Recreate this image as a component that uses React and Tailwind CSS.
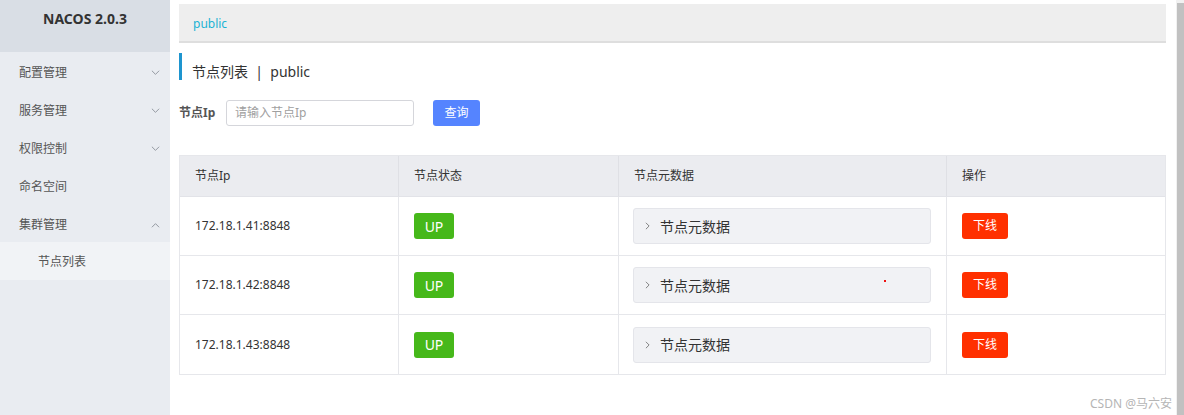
import React from 'react';

const font = { fontFamily: '"Noto Sans", "Noto Sans CJK SC", sans-serif' };

const Chevron = ({ up }) => (
  <svg viewBox="0 0 10 6" className="w-[9px] h-[6px]" fill="none" stroke="#8a9099" strokeWidth="1">
    {up ? <path d="M1 5.5L5 1.5L9 5.5" /> : <path d="M1 0.5L5 4.5L9 0.5" />}
  </svg>
);

const menu = [
  { name: '配置管理', arrow: 'down' },
  { name: '服务管理', arrow: 'down' },
  { name: '权限控制', arrow: 'down' },
  { name: '命名空间' },
  { name: '集群管理', arrow: 'up' },
];

const nodes = ['172.18.1.41:8848', '172.18.1.42:8848', '172.18.1.43:8848'];

const App = () => {
  return (
    <div className="flex w-[1184px] h-[415px] bg-white overflow-hidden text-[#333]" style={font}>
      {/* Sidebar */}
      <div className="w-[170px] shrink-0 bg-[#e9ecf1] flex flex-col">
        <div className="h-[52px] bg-[#d9dee5] flex justify-center pt-[9px]">
          <p className="text-[14px] font-bold text-[#333] leading-[20px]">NACOS 2.0.3</p>
        </div>
        <div className="pt-[2px]">
          {menu.map((m) => (
            <div key={m.name} className="h-[38px] flex items-center justify-between pl-[19px] pr-[10px]">
              <span className="text-[12px] text-[#555]">{m.name}</span>
              {m.arrow && <Chevron up={m.arrow === 'up'} />}
            </div>
          ))}
          <div className="h-[38px] -mt-[2px] flex items-center pl-[38px] bg-[#f1f3f6]">
            <span className="text-[12px] text-[#555] mt-[2px]">节点列表</span>
          </div>
        </div>
      </div>

      {/* Main */}
      <div className="flex-1 pl-[9px] pr-[10px] pt-[4px]">
        <div className="h-[39px] bg-[#eeeeee] border-b-2 border-[#dedede] flex items-center pl-[14px] pt-[3px]">
          <span className="text-[12px] text-[#1ab3d4]">public</span>
        </div>

        <div className="mt-[10px] h-[27px] border-l-[3px] border-[#1e95cf] flex items-center pl-[10px] pt-[10px]">
          <span className="text-[14px] text-[#333]">节点列表&nbsp;&nbsp;|&nbsp;&nbsp;public</span>
        </div>

        <div className="mt-[20px] flex items-center h-[26px]">
          <span className="text-[12px] font-bold text-[#555] w-[47px]">节点Ip</span>
          <div className="w-[188px] h-[26px] border border-[#d5d6db] rounded-[3px] flex items-center pl-[8px]">
            <span className="text-[12px] text-[#a0a0a0]">请输入节点Ip</span>
          </div>
          <button className="ml-[19px] w-[47px] h-[26px] bg-[#5584ff] rounded-[3px] text-white text-[12px]">查询</button>
        </div>

        {/* Table */}
        <div className="mt-[29px] border border-[#e6e7eb]">
          <div className="grid grid-cols-[219px_220px_328px_1fr] h-[41px] bg-[#ebecf0] border-b border-[#e2e3e8] text-[12px] text-[#333]">
            <div className="flex items-center pl-[15px] border-r border-[#dfe0e5]">节点Ip</div>
            <div className="flex items-center pl-[15px] border-r border-[#dfe0e5]">节点状态</div>
            <div className="flex items-center pl-[15px] border-r border-[#dfe0e5]">节点元数据</div>
            <div className="flex items-center pl-[15px]">操作</div>
          </div>
          {nodes.map((ip, i) => (
            <div
              key={ip}
              className={`grid grid-cols-[219px_220px_328px_1fr] h-[59px] ${i < nodes.length - 1 ? 'border-b border-[#e6e7eb]' : ''}`}
            >
              <div className="flex items-center pl-[15px] border-r border-[#e6e7eb] text-[12px] text-[#333]">{ip}</div>
              <div className="flex items-center pl-[15px] border-r border-[#e6e7eb]">
                <span className="w-[40px] h-[26px] bg-[#46b81a] rounded-[3px] flex items-center justify-center text-white text-[14px]">UP</span>
              </div>
              <div className="flex items-center pl-[14px] pr-[15px] border-r border-[#e6e7eb]">
                <div className="relative flex-1 h-[36px] bg-[#f1f2f5] border border-[#e4e5ea] rounded-[3px] flex items-center pl-[11px]">
                  <svg viewBox="0 0 6 10" className="w-[5px] h-[8px]" fill="none" stroke="#666" strokeWidth="1">
                    <path d="M1 1L5 5L1 9" />
                  </svg>
                  <span className="ml-[10px] text-[14px] text-[#333]">节点元数据</span>
                  {i === 1 && <span className="absolute left-[250px] top-[12px] w-[2px] h-[2px] bg-[#e11]" />}
                </div>
              </div>
              <div className="flex items-center pl-[15px]">
                <button className="w-[46px] h-[26px] bg-[#ff3000] rounded-[3px] text-white text-[12px]">下线</button>
              </div>
            </div>
          ))}
        </div>

        <div className="flex justify-end mt-[20px]">
          <span className="text-[12px] text-[#b5b5b5] -mr-[6px]">CSDN @马六安</span>
        </div>
      </div>

      {/* Scrollbar */}
      <div className="w-[8px] shrink-0 bg-[#f1f1f1] pt-[3px] pl-[1px]">
        <div className="h-full bg-[#c1c1c1]" />
      </div>
    </div>
  );
};

export default App;
